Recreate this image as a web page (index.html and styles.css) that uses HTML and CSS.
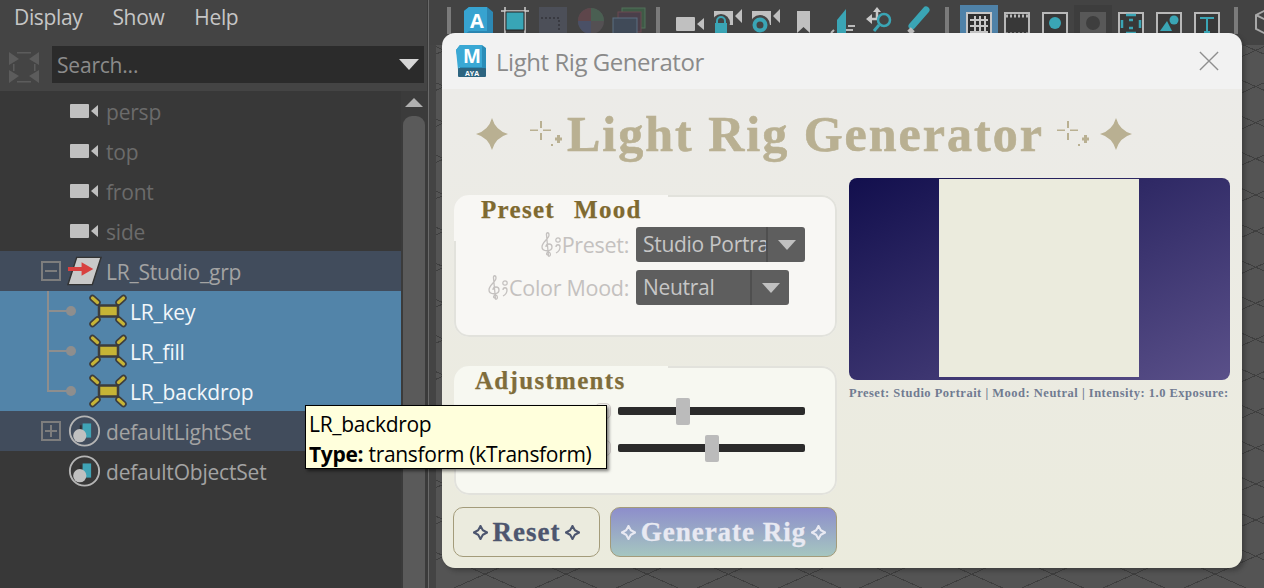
FILE: index.html
```html
<!DOCTYPE html>
<html lang="en">
<head>
<meta charset="utf-8">
<title>Light Rig Generator</title>
<link rel="stylesheet" href="styles.css">
</head>
<body>
<svg class="defs" width="0" height="0" aria-hidden="true">
  <defs>
    <symbol id="cam" viewBox="0 0 28 16"><rect x="0" y="1" width="19" height="14" rx="1" fill="#c0c0c0"/><path d="M21 8 L28 2 V14 Z" fill="#c0c0c0"/></symbol>
    <symbol id="star" viewBox="0 0 34 34"><path d="M17 1 Q20.500 13.500 33 17 Q20.500 20.500 17 33 Q13.500 20.500 1 17 Q13.500 13.500 17 1 Z" fill="#b9b092"/></symbol>
    <symbol id="sparkle" viewBox="0 0 34 30"><g fill="#b9b092"><rect x="10" y="2" width="2" height="7"/><rect x="10" y="14" width="2" height="7"/><rect x="0" y="10.500" width="8" height="1.500"/><rect x="13" y="10.500" width="8" height="1.500"/><rect x="27" y="16" width="3" height="8"/><rect x="25" y="18.500" width="7" height="3"/><rect x="21" y="25" width="2" height="2"/></g></symbol>
    <symbol id="gem" viewBox="0 0 16 16"><path d="M8 1 L10.500 5.500 L15 8 L10.500 10.500 L8 15 L5.500 10.500 L1 8 L5.500 5.500 Z" fill="none" stroke="currentColor" stroke-width="2.200"/></symbol>
    <symbol id="clef" viewBox="0 0 22 26"><path d="M8 24 C11 25 11 21 9 20 C6 20 6 23 8 23 M8.500 24 L6.500 3 C6 0 9 0 9 3 C9 7 2 10 2 15 C2 20 12 20 12 15 C12 11 6 11 6 15" fill="none" stroke="#c4c1bf" stroke-width="1.300"/><circle cx="18" cy="8" r="2.200" fill="none" stroke="#c4c1bf" stroke-width="1.200"/><path d="M16 15 C16 12 20 12 20 15 C20 18 18 20 16 21" fill="none" stroke="#c4c1bf" stroke-width="1.300"/></symbol>
    <symbol id="light" viewBox="0 0 40 36"><g stroke="#3d3d3d" stroke-width="6.500" stroke-linecap="round"><path d="M4.500 5 L9.500 9.500 M35.500 5 L30.500 9.500 M4.500 31 L9.500 26.500 M35.500 31 L30.500 26.500"/></g><g stroke="#c6b436" stroke-width="3.200" stroke-linecap="round"><path d="M4.500 5 L9.500 9.500 M35.500 5 L30.500 9.500 M4.500 31 L9.500 26.500 M35.500 31 L30.500 26.500"/></g><rect x="11" y="12.500" width="19" height="11" fill="#c6b436" stroke="#3d3d3d" stroke-width="2.500"/></symbol>
    <symbol id="set" viewBox="0 0 36 36"><circle cx="18" cy="18" r="15.500" fill="none" stroke="#b5b5b5" stroke-width="2"/><path d="M16 10 H25 V25 H16 Z" fill="#3fa3b5"/><path d="M14 12 V20" stroke="#2e2e2e" stroke-width="2"/><circle cx="13" cy="23" r="7" fill="#c0c0c0"/></symbol>
    <symbol id="connector" viewBox="0 0 30 40"><path d="M1 0 V40 M1 20 H24" stroke="#8e8e8e" stroke-width="2" fill="none"/><circle cx="24" cy="20" r="5" fill="#8e8e8e"/></symbol>
  </defs>
</svg>

<div class="app">
  <aside class="outliner">
    <nav class="menubar"><span>Display</span><span>Show</span><span>Help</span></nav>
    <div class="searchbar">
      <svg class="filter-icon" width="32" height="34" viewBox="0 0 32 34"><g fill="#5c5c5c"><path d="M1 2 L11 9 L1 15 Z M31 2 L21 9 L31 15 Z M1 20 L11 26 L1 33 Z M31 20 L21 26 L31 33 Z"/><path d="M9 2 H23 V3.500 H9 Z M9 31 H23 V32.500 H9 Z M5 14 H6.500 V21 H5 Z M26 14 H27.500 V21 H26 Z"/></g></svg>
      <div class="search-field"><span>Search...</span><i class="search-arrow"></i></div>
    </div>
    <div class="tree-area">
      <ul class="tree">
        <li class="row row-cam"><svg class="cam-icon"><use href="#cam"/></svg><span class="dim">persp</span></li>
        <li class="row row-cam"><svg class="cam-icon"><use href="#cam"/></svg><span class="dim">top</span></li>
        <li class="row row-cam"><svg class="cam-icon"><use href="#cam"/></svg><span class="dim">front</span></li>
        <li class="row row-cam"><svg class="cam-icon"><use href="#cam"/></svg><span class="dim">side</span></li>
        <li class="row row-top row-group">
          <svg class="expander" viewBox="0 0 20 20"><rect x="1" y="1" width="18" height="18" fill="none" stroke="#7d7d7d" stroke-width="2"/><path d="M4 10 H16" stroke="#7d7d7d" stroke-width="2"/></svg>
          <svg class="node-icon" viewBox="0 0 36 30"><path d="M10 1 H35 L26 29 H1 Z" fill="#c9c9c9" stroke="#333" stroke-width="1.500"/><path d="M1 11 H15 V6 L27 13 L15 20 V15 H1 Z" fill="#d8403f"/></svg>
          <span class="muted">LR_Studio_grp</span>
        </li>
        <li class="row row-child row-sel"><svg class="connector"><use href="#connector"/></svg><svg class="light-icon"><use href="#light"/></svg><span class="bright">LR_key</span></li>
        <li class="row row-child row-sel"><svg class="connector"><use href="#connector"/></svg><svg class="light-icon"><use href="#light"/></svg><span class="bright">LR_fill</span></li>
        <li class="row row-child row-sel"><svg class="connector" viewBox="0 0 30 40"><path d="M1 0 V20 H24" stroke="#8e8e8e" stroke-width="2" fill="none"/><circle cx="24" cy="20" r="5" fill="#8e8e8e"/></svg><svg class="light-icon"><use href="#light"/></svg><span class="bright">LR_backdrop</span></li>
        <li class="row row-top row-group">
          <svg class="expander" viewBox="0 0 20 20"><rect x="1" y="1" width="18" height="18" fill="none" stroke="#7d7d7d" stroke-width="2"/><path d="M4 10 H16 M10 4 V16" stroke="#7d7d7d" stroke-width="2"/></svg>
          <svg class="node-icon set-icon"><use href="#set"/></svg>
          <span class="muted">defaultLightSet</span>
        </li>
        <li class="row row-top row-plain">
          <svg class="node-icon set-icon"><use href="#set"/></svg>
          <span class="muted">defaultObjectSet</span>
        </li>
      </ul>
      <div class="scrollbar"><i class="scroll-up"></i><div class="scroll-thumb"></div></div>
    </div>
  </aside>

  <main class="workspace">
    <div class="toolbar">
      <i class="sep sep-first"></i>
      <div class="tool"><svg class="svg-free" width="32" height="30" viewBox="0 0 32 30"><path d="M3 4 L8 0 H26 L32 5 V30 H3 Z" fill="#2c88b4"/><path d="M8 0 H26 V24 H8 L3 28 V4 Z" fill="#37a3d0"/><text x="16" y="21" class="tool-a">A</text></svg></div>
      <div class="tool"><svg width="28" height="28" viewBox="0 0 28 28"><path d="M0 4 H28 M4 0 V28 M24 0 V28" stroke="#cfcfcf" stroke-width="1.500"/><rect x="5" y="5" width="18" height="18" fill="#38a5b6" stroke="#222" stroke-width="1"/></svg></div>
      <div class="tool"><svg width="28" height="28" viewBox="0 0 28 28"><rect width="28" height="28" fill="#4c4f58"/><path d="M2 11 H20 V25" fill="none" stroke="#33343a" stroke-width="1.500" stroke-dasharray="2 2"/></svg></div>
      <div class="tool"><svg width="28" height="28" viewBox="0 0 28 28"><circle cx="14" cy="14" r="13" fill="#545053"/><path d="M14 14 L14 1 A13 13 0 0 1 27 14 Z" fill="#4a5f52"/><path d="M14 14 L1 14 A13 13 0 0 1 14 1 Z" fill="#5e464b"/><path d="M14 14 L14 27 A13 13 0 0 1 1 14 Z" fill="#4a5066"/></svg></div>
      <div class="tool"><svg width="32" height="28" viewBox="0 0 32 28"><rect x="9" y="1" width="23" height="20" fill="#3f5a46" stroke="#52725a"/><rect x="5" y="5" width="23" height="20" fill="#4a3f4a" stroke="#6a4a50"/><rect x="0" y="11" width="24" height="17" fill="#404a58" stroke="#5b6e80"/></svg></div>
      <i class="sep"></i>
      <div class="tool"><svg class="t-cam"><use href="#cam"/></svg></div>
      <div class="tool"><svg width="30" height="28" viewBox="0 0 30 28"><path d="M1 4 H20 V18 H1 Z M22 9 L29 2 V16 Z" fill="#c0c0c0"/><circle cx="8" cy="16" r="9" fill="#444"/><path d="M4 17 V14 A4 4 0 0 1 12 14 V17" fill="none" stroke="#3aa5b5" stroke-width="2"/><rect x="2" y="16" width="12" height="10" fill="#3aa5b5"/></svg></div>
      <div class="tool"><svg width="30" height="28" viewBox="0 0 30 28"><path d="M1 4 H20 V18 H1 Z M22 9 L29 2 V16 Z" fill="#c0c0c0"/><circle cx="9" cy="18" r="10" fill="#444"/><circle cx="9" cy="18" r="5.500" fill="none" stroke="#3aa5b5" stroke-width="4"/></svg></div>
      <div class="tool"><svg width="14" height="28" viewBox="0 0 14 28"><path d="M0 4 H13 V26 L6.500 20 L0 26 Z" fill="#c0c0c0"/></svg></div>
      <div class="tool"><svg width="30" height="28" viewBox="0 0 30 28"><path d="M10 13 L19 2 V26 H10 Z" fill="#3aa5b5"/><path d="M21 19 H28 M19 23 H26" stroke="#bbb" stroke-width="2"/><path d="M4 26 L7 23" stroke="#bbb" stroke-width="2"/></svg></div>
      <div class="tool"><svg width="28" height="28" viewBox="0 0 28 28"><path d="M11 0 L15 5 H7 Z M0 12 L6 7 V17 Z" fill="#c8c8c8"/><path d="M6 12 H13 M11 4 V12" stroke="#c8c8c8" stroke-width="2.500"/><circle cx="18" cy="13" r="6" fill="none" stroke="#3aa5b5" stroke-width="2.500"/><path d="M13 18 L8 24" stroke="#3aa5b5" stroke-width="3"/></svg></div>
      <div class="tool"><svg width="26" height="28" viewBox="0 0 26 28"><path d="M21 3 L7 19" stroke="#3aa5b5" stroke-width="7" stroke-linecap="round"/><path d="M4 22 L8 26" stroke="#bbb" stroke-width="5"/></svg></div>
      <i class="sep"></i>
      <div class="tool tool-active"><svg width="26" height="28" viewBox="0 0 26 28"><rect x="1" y="1" width="24" height="26" fill="#2f2f2f" stroke="#c6c6c6" stroke-width="2"/><path d="M4 8 H22 M4 14 H22 M4 20 H22 M9 4 V26 M14 4 V26 M19 4 V26" stroke="#c6c6c6" stroke-width="2"/></svg></div>
      <div class="tool tool-low"><svg width="26" height="26" viewBox="0 0 26 26"><rect x="1" y="1" width="24" height="24" fill="#383838" stroke="#b8b8b8" stroke-width="2"/><path d="M2 4 H24 M2 22 H24" stroke="#b8b8b8" stroke-width="3" stroke-dasharray="2 2"/></svg></div>
      <div class="tool tool-low"><svg width="26" height="26" viewBox="0 0 26 26"><rect x="1" y="1" width="24" height="24" fill="#383838" stroke="#b8b8b8" stroke-width="2"/><circle cx="13" cy="11" r="6" fill="#3aa5b5"/></svg></div>
      <div class="tool tool-low tool-off"><svg width="26" height="26" viewBox="0 0 26 26"><rect width="26" height="26" fill="#585858"/><circle cx="13" cy="11" r="7" fill="#3e3e3e"/></svg></div>
      <div class="tool tool-low"><svg width="26" height="26" viewBox="0 0 26 26"><rect x="1" y="1" width="24" height="24" fill="#383838" stroke="#b8b8b8" stroke-width="2"/><path d="M8 3 H18 M8 21 H18 M4 8 V16 M22 8 V16 M11 8 H15 M11 16 H15" stroke="#3aa5b5" stroke-width="2.500"/></svg></div>
      <div class="tool tool-low"><svg width="26" height="26" viewBox="0 0 26 26"><rect x="1" y="1" width="24" height="24" fill="#383838" stroke="#b8b8b8" stroke-width="2"/><circle cx="18" cy="8" r="4.500" fill="#3aa5b5"/><path d="M4 19 L11 9 L16 19 Z" fill="#3aa5b5"/></svg></div>
      <div class="tool tool-low"><svg width="26" height="26" viewBox="0 0 26 26"><rect x="1" y="1" width="24" height="24" fill="#383838" stroke="#b8b8b8" stroke-width="2"/><path d="M6 6 H20 M13 6 V20 M10 20 H16" stroke="#3aa5b5" stroke-width="2"/></svg></div>
      <i class="sep"></i>
      <div class="tool"><svg width="26" height="30" viewBox="0 0 26 30"><path d="M13 2 L25 8 V22 L13 28 L1 22 V8 Z M1 8 L13 14 L25 8 M13 14 V28" fill="none" stroke="#a8a8a8" stroke-width="2"/></svg></div>
    </div>
    <div class="viewport"></div>
  </main>

  <section class="window">
    <header class="titlebar">
      <svg class="maya-logo" width="30" height="32" viewBox="0 0 30 32"><path d="M0 5 L4 0 H26 L30 3 V24 H4 Z" fill="#2a8db8"/><path d="M4 0 H26 V22 H4 L2 25 L0 5 Z" fill="#3aa8d4"/><rect x="2" y="23" width="28" height="9" rx="1" fill="#2d6480"/><text x="16" y="18" class="maya-m">M</text><text x="16" y="30.500" class="maya-aya">AYA</text></svg>
      <span class="window-title">Light Rig Generator</span>
      <svg class="close" width="22" height="22" viewBox="0 0 22 22"><path d="M1 1 L21 21 M21 1 L1 21" stroke="#8f8f8f" stroke-width="1.500"/></svg>
    </header>
    <div class="window-body">
      <h1 class="heading">
        <svg class="h-star"><use href="#star"/></svg>
        <svg class="h-sparkle"><use href="#sparkle"/></svg>
        <span class="h-text">Light Rig Generator</span>
        <svg class="h-sparkle after"><use href="#sparkle"/></svg>
        <svg class="h-star"><use href="#star"/></svg>
      </h1>
      <div class="columns">
        <div class="controls">
          <fieldset class="group group-preset">
            <legend class="group-title title-preset">Preset&nbsp; Mood</legend>
            <div class="field">
              <label class="field-label"><svg class="clef"><use href="#clef"/></svg>Preset:</label>
              <div class="combo combo-wide"><span class="combo-text">Studio Portrait</span><span class="combo-btn"><i class="combo-arrow"></i></span></div>
            </div>
            <div class="field">
              <label class="field-label"><svg class="clef"><use href="#clef"/></svg>Color Mood:</label>
              <div class="combo combo-narrow"><span class="combo-text">Neutral</span><span class="combo-btn"><i class="combo-arrow"></i></span></div>
            </div>
          </fieldset>
          <fieldset class="group group-adjust">
            <legend class="group-title title-adjust">Adjustments</legend>
            <div class="slider-row"><span class="spin"></span><div class="track"><i class="thumb thumb-a"></i></div></div>
            <div class="slider-row"><span class="spin"></span><div class="track"><i class="thumb thumb-b"></i></div></div>
          </fieldset>
          <div class="actions">
            <button class="btn btn-reset"><svg class="gem"><use href="#gem"/></svg>Reset<svg class="gem"><use href="#gem"/></svg></button>
            <button class="btn btn-generate"><svg class="gem"><use href="#gem"/></svg>Generate Rig<svg class="gem"><use href="#gem"/></svg></button>
          </div>
        </div>
        <div class="preview-col">
          <div class="preview"><div class="preview-card"></div></div>
          <p class="caption">Preset: Studio Portrait | Mood: Neutral | Intensity: 1.0 Exposure:</p>
        </div>
      </div>
    </div>
  </section>

  <div class="tooltip">
    <div>LR_backdrop</div>
    <div><b>Type:</b> transform (kTransform)</div>
  </div>
</div>
</body>
</html>
```

FILE: styles.css
```css
* { box-sizing: border-box; }
html, body { margin: 0; height: 100%; overflow: hidden; }
body { font-family: "Open Sans", "Noto Sans", sans-serif; background: #444; }
.defs { position: absolute; }
ul { list-style: none; margin: 0; padding: 0; }
svg { overflow: visible; }

.app { position: relative; display: flex; width: 1264px; height: 588px; overflow: hidden; }

/* Outliner */
.outliner { width: 428px; display: flex; flex-direction: column; background: #444; flex: none; border-right: 1px solid #3a3a3a; }
.menubar { height: 46px; padding: 3px 0 0 14px; display: flex; gap: 30px; font-size: 21px; letter-spacing: -.35px; color: #c6c6c6; }
.searchbar { height: 45px; display: flex; padding: 0 3px 8px 8px; gap: 12px; align-items: flex-start; }
.filter-icon { margin-top: 4px; flex: none; }
.search-field { flex: 1; height: 37px; background: #2b2b2b; color: #8b8b8b; font-size: 21px; padding-left: 5px; display: flex; align-items: center; justify-content: space-between; letter-spacing: -.2px; }
.search-arrow { width: 0; height: 0; margin-right: 5px; border-left: 10px solid transparent; border-right: 10px solid transparent; border-top: 11px solid #d6d6d6; }

.tree-area { flex: 1; display: flex; background: #383838; min-height: 0; }
.tree { width: 401px; flex: none; }
.row { height: 40px; display: flex; align-items: center; font-size: 21px; letter-spacing: -.2px; white-space: nowrap; }
.row-cam { padding-left: 70px; }
.row-top { padding-left: 41px; }
.row-plain { padding-left: 67px; }
.row-group { background: #414c5c; }
.row-child { padding-left: 47px; }
.row-sel { background: #5284a9; }
.dim { color: #6b6b6b; margin: 2px 0 0 8px; }
.muted { color: #a3a3a3; margin: 2px 0 0 4px; }
.bright { color: #f2f7fa; margin: 2px 0 0 2px; }
.cam-icon { width: 28px; height: 16px; }
.expander { width: 20px; height: 20px; margin-right: 6px; flex: none; }
.node-icon { width: 35px; height: 34px; flex: none; }
.connector { width: 30px; height: 40px; flex: none; margin-right: 11px; }
.light-icon { width: 40px; height: 36px; flex: none; }

.scrollbar { flex: 1; background: #3b3b3b; padding: 7px 3px 0 2px; display: flex; flex-direction: column; align-items: center; }
.scroll-up { width: 0; height: 0; border-left: 9px solid transparent; border-right: 9px solid transparent; border-bottom: 9px solid #b0b0b0; margin-bottom: 9px; flex: none; }
.scroll-thumb { flex: 1; width: 22px; background: #5a5a5a; border-radius: 9px 9px 0 0; }

/* Workspace */
.workspace { flex: 1; display: flex; flex-direction: column; min-width: 0; background: #444; border-left: 1px solid #6a6a6a; }
.toolbar { height: 45px; flex: none; display: flex; padding: 5px 0 0 14px; background: #434343; overflow: hidden; }
.sep { width: 4px; height: 27px; margin: 2px 11px 0 8px; background: #7b7b7b; flex: none; }
.sep-first { margin-left: 4px; margin-right: 7px; }
.tool { width: 38px; flex: none; display: flex; justify-content: center; align-items: flex-start; padding-top: 2px; height: 40px; }
.tool-low { padding-top: 7px; }
.tool-active { background: #4f82a8; padding-top: 7px; }
.tool-off { background: #3d3d3d; }
.t-cam { width: 28px; height: 16px; margin-top: 9px; }
.tool-a { font: 700 20px "Open Sans", sans-serif; fill: #fff; text-anchor: middle; }
.viewport { flex: 1; margin-left: 7px; background-color: #545454;
  background-image:
    repeating-linear-gradient(24deg, transparent 0 32px, #3f3f3f 32px 33px),
    repeating-linear-gradient(-24deg, transparent 0 32px, #3f3f3f 32px 33px);
}

/* Floating window */
.window { position: absolute; left: 442px; top: 33px; width: 800px; height: 535px; border-radius: 13px; overflow: hidden; display: flex; flex-direction: column; box-shadow: 3px 3px 4px rgba(40,40,40,.45); }
.titlebar { height: 56px; flex: none; background: #f2f2f2; display: flex; align-items: center; padding: 0 23px 0 14px; }
.maya-logo { flex: none; }
.maya-m { font: 700 19px "Open Sans", sans-serif; fill: #fff; text-anchor: middle; }
.maya-aya { font: 700 7px "Open Sans", sans-serif; fill: #fff; text-anchor: middle; }
.window-title { margin-left: 10px; font-size: 24px; color: #8a8a8a; letter-spacing: -.45px; flex: 1; }
.close { flex: none; width: 20px; height: 20px; }

.window-body { flex: 1; background: linear-gradient(180deg, #ecebe8, #ebebdd); padding: 0 12px; display: flex; flex-direction: column; }
.heading { margin: 0; height: 89px; display: flex; align-items: center; padding: 0 0 0 21px; font: 700 50px "Liberation Serif", serif; color: #b9b092; white-space: nowrap; letter-spacing: 2px; -webkit-text-stroke: .6px #b9b092; }
.h-text { margin-left: 3px; }
.h-star { width: 34px; height: 34px; flex: none; }
.h-sparkle { width: 34px; height: 30px; margin-left: 21px; flex: none; }
.h-sparkle.after { margin-left: 13px; margin-right: 8px; }

.columns { display: flex; gap: 12px; flex: 1; }
.controls { width: 383px; flex: none; display: flex; flex-direction: column; }
.group { position: relative; margin: 0; padding: 0; min-width: 0; border: 2px solid #e2e2dc; border-radius: 15px; width: 383px; }
.group-preset { height: 142px; margin-top: 17px; background: #f8f7f4; }
.group-adjust { height: 129px; margin-top: 29px; background: #f7f8f1; }
.group-title { float: left; display: block; width: 214px; height: 46px; margin: -2px 0 -14px -2px; padding: 0 0 0 27px; font: 700 25px/30px "Liberation Serif", serif; color: #7f6a30; letter-spacing: 1.3px; word-spacing: 2px; white-space: nowrap; border-radius: 15px 0 0 0; -webkit-text-stroke: .25px currentColor; }
.title-preset { background: #f8f7f4; }
.title-adjust { background: #f7f8f1; color: #7f6d3b; padding-left: 21px; margin-bottom: -20px; }
.field { clear: both; display: flex; align-items: center; height: 35px; margin-bottom: 8px; }
.field-label { width: 173px; flex: none; display: flex; justify-content: flex-end; align-items: center; font-size: 21.500px; letter-spacing: -.3px; color: #c4c1bf; white-space: nowrap; }
.clef { width: 22px; height: 26px; flex: none; }
.combo { margin-left: 7px; height: 35px; background: #5e5e5e; border-radius: 3px; color: #c6c6c6; font-size: 21px; letter-spacing: -.3px; display: flex; overflow: hidden; }
.combo-wide { width: 169px; }
.combo-narrow { width: 153px; }
.combo-text { flex: 1; min-width: 0; overflow: hidden; white-space: nowrap; padding-left: 7px; line-height: 35px; }
.combo-btn { width: 39px; flex: none; border-left: 2px solid #4f4f4f; display: flex; align-items: center; justify-content: center; }
.combo-arrow { width: 0; height: 0; border-left: 9px solid transparent; border-right: 9px solid transparent; border-top: 10px solid #c0c0c0; }

.slider-row { clear: both; display: flex; align-items: center; height: 37px; padding-left: 139px; }
.spin { width: 16px; height: 16px; border: 1px solid #d5d0cd; border-radius: 5px; background: #f3f1ee; flex: none; }
.track { position: relative; width: 187px; height: 8px; margin-left: 7px; background: #2b2b2b; border-radius: 2px; flex: none; }
.thumb { position: absolute; top: -9px; width: 14px; height: 27px; background: #bbb; border-radius: 2px; }
.thumb-a { left: 58px; }
.thumb-b { left: 87px; }

.actions { display: flex; gap: 10px; margin-top: 12px; margin-left: -1px; }
.btn { height: 50px; border: 1px solid #a39b7a; border-radius: 10px; font: 700 27px "Liberation Serif", serif; letter-spacing: 1px; display: flex; align-items: center; justify-content: center; gap: 5px; padding: 0; -webkit-text-stroke: .3px currentColor; }
.btn-reset { width: 147px; background: #ebebde; color: #4d566f; }
.btn-generate { width: 227px; background: linear-gradient(180deg, #8d8ecb, #a5c6c0); color: #e8e9f2; }
.gem { width: 15px; height: 15px; flex: none; }

.preview-col { width: 381px; flex: none; display: flex; flex-direction: column; min-width: 0; }
.preview { height: 202px; background: linear-gradient(to bottom right, #120f4d, #5a5089); border-radius: 8px; display: flex; justify-content: center; padding: 1px 2px 3px 0; }
.preview-card { width: 200px; background: #ebebdd; }
.caption { margin: 5px 0 0; font: 700 12.500px/17px "Liberation Serif", serif; letter-spacing: .5px; color: #717b91; white-space: nowrap; height: 17px; }

/* Tooltip */
.tooltip { position: absolute; left: 305px; top: 405px; width: 302px; height: 64px; padding: 3px 3px; background: #ffffdc; border: 1px solid #000; color: #000; font-size: 21px; line-height: 30px; letter-spacing: -.3px; box-shadow: 2px 2px 3px rgba(0,0,0,.5); white-space: nowrap; }
.tooltip b { font-weight: 700; }
```
